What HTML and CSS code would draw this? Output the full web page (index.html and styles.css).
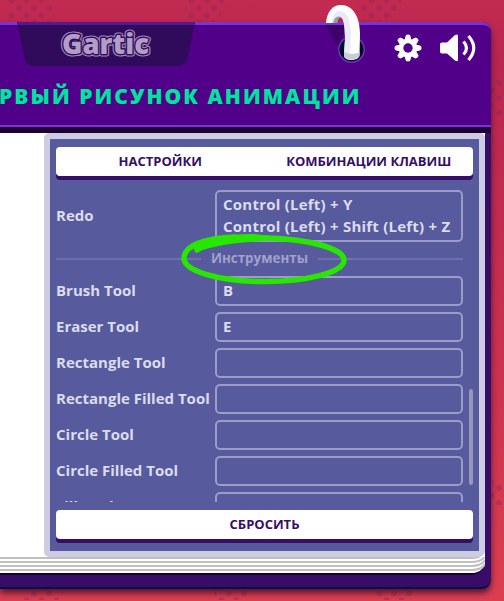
FILE: index.html
```html
<!DOCTYPE html>
<html lang="ru">
<head>
<meta charset="utf-8">
<title>Gartic</title>
<link rel="stylesheet" href="styles.css">
</head>
<body>
<svg class="backdrop" viewBox="0 0 504 601">
  <defs><pattern id="dots" width="15" height="15" patternUnits="userSpaceOnUse"><circle cx="4" cy="8" r="2.9"/><circle cx="11.5" cy="0.5" r="2.9"/><circle cx="11.5" cy="15.5" r="2.9"/></pattern></defs>
  <g fill="url(#dots)">
    <path d="M8 0H54V22H8zM186 0H232L215 22H186zM358 0H402L391 22H361zM491 82L504 72V115H491zM491 480L504 487V505H491zM22 588H62V600H22zM214 588H248V600H214zM376 588H414V600H376z"/>
  </g>
</svg>
<main class="book">
  <header class="cover">
    <div class="brand">
      <svg width="178" height="44" viewBox="0 0 178 44">
        <path d="M0 0H178L170.500 36Q168.500 44 160 44H18Q9.500 44 7.500 36Z" fill="#310b5b"/>
        <path d="M0 0H178L177.500 3H.5Z" fill="#561993"/>
        <g class="logo">
          <text class="logo-line" x="45" y="32" textLength="87" lengthAdjust="spacingAndGlyphs">Gartic</text>
          <text class="logo-gap" x="45" y="32" textLength="87" lengthAdjust="spacingAndGlyphs">Gartic</text>
          <text class="logo-fill" x="45" y="32" textLength="87" lengthAdjust="spacingAndGlyphs">Gartic</text>
        </g>
      </svg>
    </div>
    <div class="actions">
      <svg width="28" height="28" viewBox="0 0 28 28"><g fill="#fff"><circle cx="14" cy="14" r="9.400"/><path d="M11 4L12 1Q14 .1 16 1L17 4V24L16 27Q14 27.900 12 27L11 24Z"/><path d="M11 4L12 1Q14 .1 16 1L17 4V24L16 27Q14 27.900 12 27L11 24Z" transform="rotate(45 14 14)"/><path d="M11 4L12 1Q14 .1 16 1L17 4V24L16 27Q14 27.900 12 27L11 24Z" transform="rotate(90 14 14)"/><path d="M11 4L12 1Q14 .1 16 1L17 4V24L16 27Q14 27.900 12 27L11 24Z" transform="rotate(135 14 14)"/></g><circle cx="14" cy="14" r="4.700" fill="#510089"/></svg>
      <svg width="38" height="28" viewBox="0 0 38 28"><path d="M3 8.500H8L16 1Q19-.5 19 2V26Q19 28 16 26.500L8 19.500H3Q1 19.500 1 17.500V10.500Q1 8.500 3 8.500Z" fill="#fff"/><path d="M24.500 7.500Q30.500 14 24.500 20.500M29.500 2Q40 14 29.500 26" fill="none" stroke="#fff" stroke-width="3.100"/></svg>
    </div>
    <h1>РВЫЙ РИСУНОК АНИМАЦИИ</h1>
  </header>
  <div class="pages">
    <section class="panel">
      <nav class="bar tabs"><span>НАСТРОЙКИ</span><span>КОМБИНАЦИИ КЛАВИШ</span></nav>
      <div class="scroller">
        <div class="list">
          <div class="row tall"><span class="label">Redo</span><div class="field"><span>Control (Left) + Y</span><span>Control (Left) + Shift (Left) + Z</span></div></div>
          <div class="divider"><span>Инструменты</span></div>
          <div class="row"><span class="label">Brush Tool</span><div class="field">B</div></div>
          <div class="row"><span class="label">Eraser Tool</span><div class="field">E</div></div>
          <div class="row"><span class="label">Rectangle Tool</span><div class="field"></div></div>
          <div class="row"><span class="label">Rectangle Filled Tool</span><div class="field"></div></div>
          <div class="row"><span class="label">Circle Tool</span><div class="field"></div></div>
          <div class="row"><span class="label">Circle Filled Tool</span><div class="field"></div></div>
          <div class="row"><span class="label">Fill Tool</span><div class="field"></div></div>
        </div>
        <div class="thumb"></div>
      </div>
      <div class="bar reset"><span>СБРОСИТЬ</span></div>
    </section>
    <svg class="stack" width="485" height="16" viewBox="0 0 485 16"><path d="M0 0H485V7Q482 16 471 16H0Z" fill="#fff"/><path d="M0 1H471Q482 1 485-5M0 5H471Q482 5 485-1M0 9H471Q482 9 485 3M0 13H471Q482 13 485 7" fill="none" stroke="#bfbfbf" stroke-width="2"/></svg>
  </div>
</main>
<svg class="ring" width="50" height="66" viewBox="322 0 50 66">
  <path d="M325.500 25H347L338 47Z" fill="#3d006b"/>
  <circle cx="351.500" cy="49.500" r="12.700" fill="#020c20" stroke="#7935d1" stroke-width="1.300"/>
  <path d="M326 23C327 12 332 5 341 5C353 5 360 17 360 34L359.500 56Q358 60 351 60Q345 60 344 56L345 40C345 27 344 17 340 17Q338 17 337 23Z" fill="#fff"/>
  <path d="M338 11C347 10 350 20 351 31L350 54Q347 55 344 53L345 39C345 27 344 17 340 17Q335 18 333 23H331Q333 13 338 11Z" fill="#e6eafa"/>
  <path d="M333 23Q335 15 341 17Q338 18 337 23Z" fill="#999"/>
  <path d="M344 52Q351 56 360 52L359 57Q351 62 344 57Z" fill="#c6cbdd"/>
</svg>
<svg class="marker" width="170" height="56" viewBox="180 232 170 56">
  <path d="M197 250C214 239 242 237 267 238C310 239 344 249 344 260C344 273 305 281.500 265 281.500C218 281.500 184 271 184 258C184 246 204 238 235 237" fill="none" stroke="#27e600" stroke-width="5.500" stroke-linecap="round"/>
  <path d="M191 246Q212 234 253 234L279 237L264 241Q220 243 197 252Z" fill="#27e600"/>
</svg>
</body>
</html>
```

FILE: styles.css
```css
* { box-sizing: border-box; }
body {
  margin: 0;
  width: 504px;
  height: 601px;
  overflow: hidden;
  position: relative;
  background: linear-gradient(#c22b50 0, #b92650 10%, #c52e50 45%, #dc3e50 100%);
  font-family: "Open Sans", "Noto Sans", sans-serif;
  font-weight: 700;
}
.backdrop { position: absolute; inset: 0; width: 504px; height: 601px; }
.backdrop circle { fill: #922458; opacity: .4; }
.book {
  position: relative;
  margin-top: 22px;
  width: 491px;
  height: 567px;
  background: #370d67;
  border-radius: 0 9px 9px 0;
  border-bottom: 2px solid #071047;
  box-shadow: 0 4px 6px #55142f;
}
.cover {
  height: 111px;
  border-top: 3px solid #7935d1;
  border-bottom: 6px solid #1d0035;
  border-radius: 0 9px 0 0;
  background: linear-gradient(#7935d1, #7935d1) 0 100% / 100% 2px no-repeat, #510089;
  display: grid;
  grid-template-columns: 390px auto;
  grid-template-rows: 52px 1fr;
}
.brand { padding-left: 17px; margin-top: -3px; }
.brand svg { display: block; }
.logo { font-family: "Open Sans", sans-serif; font-weight: 800; font-size: 28px; }
.logo-line { fill: none; stroke: #a58dbd; stroke-width: 5px; stroke-linejoin: round; }
.logo-gap { fill: none; stroke: #310b5b; stroke-width: 2.8px; stroke-linejoin: round; }
.logo-fill { fill: #b19dc5; }
.actions { display: flex; gap: 17px; padding: 9px 0 0 4px; }
h1 {
  grid-column: 1 / 3;
  margin: 0;
  font-size: 21px;
  line-height: 38px;
  font-weight: 800;
  letter-spacing: 2.05px;
  margin-left: -1px;
  color: #02e3a0;
  white-space: nowrap;
}
.pages { width: 485px; height: 440px; background: #fff; border-radius: 0 0 14px 0; box-shadow: 0 2px #17002e; }
.panel {
  margin-left: 44px;
  width: 441px;
  height: 424px;
  padding: 8px 6px;
  border: 6px solid #cdcce3;
  border-radius: 5px 5px 6px 5px;
  background: #575a9c;
}
.stack { display: block; }
.bar {
  height: 29px;
  background: #fff;
  border-radius: 4px;
  box-shadow: 0 4px #370d67;
  color: #370d67;
  font-size: 13px;
  line-height: 28px;
  text-align: center;
  white-space: nowrap;
}
.tabs { display: grid; grid-template-columns: 1fr 1fr; }
.scroller { height: 322px; margin-top: 4px; overflow: hidden; display: flex; justify-content: space-between; }
.list { width: 407px; padding-top: 10px; }
.row { display: grid; grid-template-columns: 159px 248px; height: 30px; margin-bottom: 6px; align-items: center; }
.tall { height: 52px; margin: 0; }
.label, .field { color: #dcdcef; font-size: 15px; white-space: nowrap; }
.label { padding-bottom: 3px; }
.field { border: 2px solid #9c9cc8; border-radius: 5px; height: 100%; padding: 0 6px; line-height: 24px; }
.tall .field { line-height: 22px; padding-top: 1px; letter-spacing: .23px; }
.field span { display: block; }
.divider { display: flex; align-items: center; gap: 10px; height: 34px; color: #a1a1cc; font-size: 13.4px; }
.divider span { padding-bottom: 2px; }
.divider::before, .divider::after { content: ""; flex: 1; height: 2px; background: #6e70ab; }
.thumb { width: 4px; height: 96px; margin-top: 209px; border-radius: 2px; background: #9896bd; }
.reset { margin-top: 8px; }
.ring { position: absolute; left: 322px; top: 0; }
.marker { position: absolute; left: 180px; top: 232px; }
```
